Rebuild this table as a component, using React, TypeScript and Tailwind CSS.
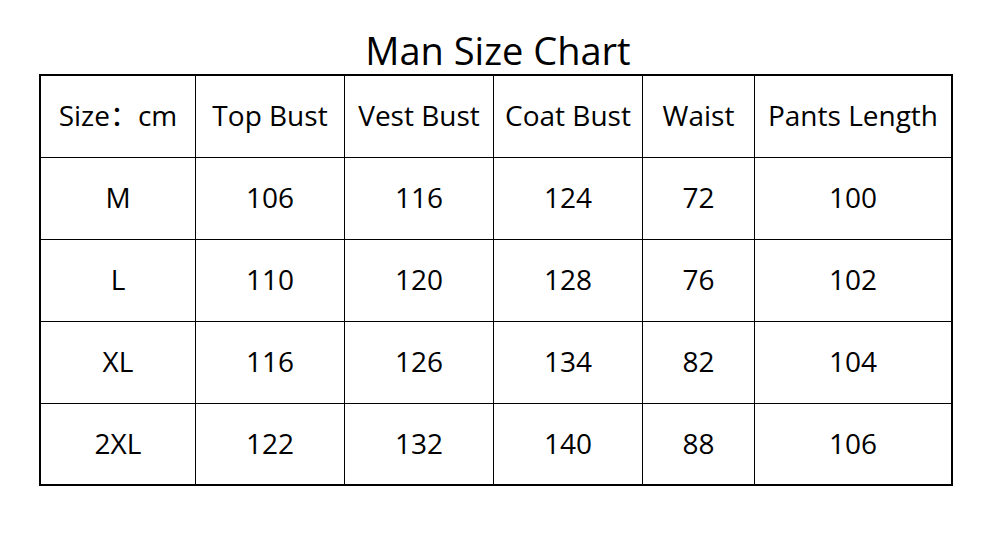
import React from "react";

const headers = ["Size：cm", "Top Bust", "Vest Bust", "Coat Bust", "Waist", "Pants Length"];

const rows = [
  ["M", "106", "116", "124", "72", "100"],
  ["L", "110", "120", "128", "76", "102"],
  ["XL", "116", "126", "134", "82", "104"],
  ["2XL", "122", "132", "140", "88", "106"],
];

export default function App() {
  const all = [headers, ...rows];

  return (
    <main
      className="w-[996px] h-[545px] bg-white text-black"
      style={{ fontFamily: '"Open Sans", "Noto Sans", "Noto Sans CJK SC", sans-serif' }}
    >
      {/* Title */}
      <h1 className="h-[74px] pt-[26px] text-center text-[38px] leading-[48px] font-normal">
        Man Size Chart
      </h1>

      {/* Table */}
      <div className="ml-[39px] w-[914px] border-2 border-black grid grid-cols-[155px_149px_149px_149px_112px_196px] grid-rows-[82px_82px_82px_82px_80px]">
        {all.map((row, r) =>
          row.map((cell, c) => (
            <div
              key={`${r}-${c}`}
              className={`flex items-center justify-center pb-[3px] text-[28px] leading-none border-black ${
                c < 5 ? "border-r" : ""
              } ${r < 4 ? "border-b" : ""}`}
            >
              {cell}
            </div>
          ))
        )}
      </div>
    </main>
  );
}
